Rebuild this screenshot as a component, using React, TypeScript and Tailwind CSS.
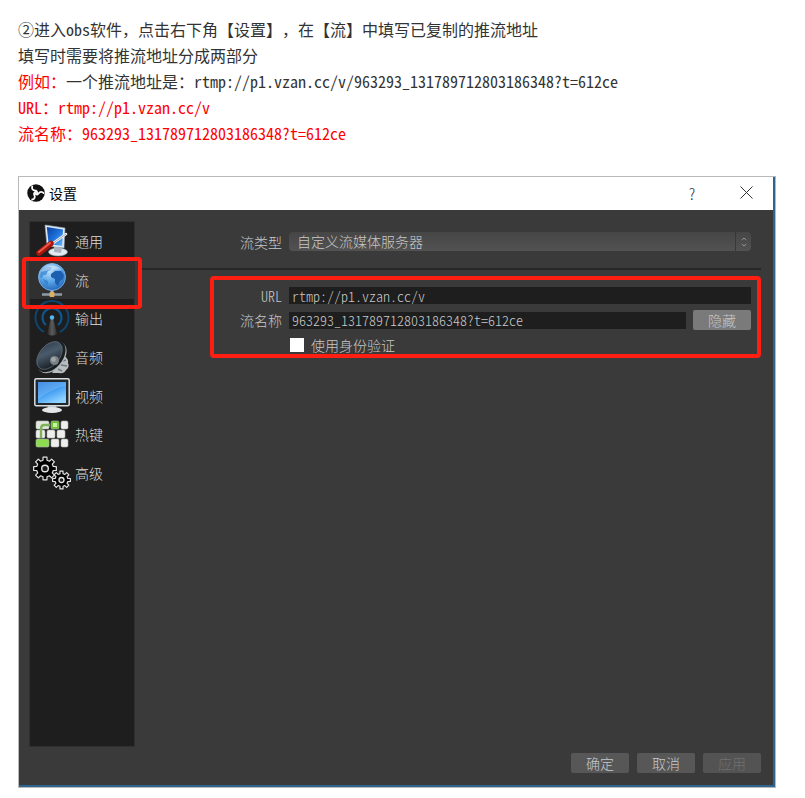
import type { ReactNode } from 'react'

function ObsLogo() {
  return (
    <svg width="18" height="18" viewBox="0 0 36 36" aria-hidden="true">
      <circle cx="18" cy="18" r="17.5" fill="#111111" />
      {[0, 120, 240].map((a) => (
        <path
          key={a}
          d="M20 19 C21 15 19 13 15.5 13 C11 12.5 9 9 10.5 5"
          fill="none"
          stroke="#ffffff"
          strokeWidth="3.6"
          strokeLinecap="round"
          transform={`rotate(${a} 18 18)`}
        />
      ))}
    </svg>
  )
}

function GeneralIcon() {
  return (
    <svg width="36" height="36" viewBox="0 0 36 36" aria-hidden="true">
      <defs>
        <linearGradient id="gen-screen" x1="0" y1="0" x2="1" y2="1">
          <stop offset="0" stopColor="#0a3f9e" />
          <stop offset="0.5" stopColor="#1d6fd8" />
          <stop offset="1" stopColor="#6db8f5" />
        </linearGradient>
      </defs>
      <ellipse cx="24" cy="29" rx="9.5" ry="4" fill="#e4eaf1" stroke="#8d98a5" strokeWidth="0.6" />
      <path d="M20 23 L28 25 L27 30 L20 29 Z" fill="#aab4c0" />
      <path d="M11 2 L31 5 L30 25 L13 23 Z" fill="#dcecf7" stroke="#9aa5b1" strokeWidth="0.6" />
      <path d="M12.8 4 L29 6.5 L28.2 23 L14.6 21 Z" fill="url(#gen-screen)" />
      <path d="M18 21 L32 11" stroke="#f4f6f8" strokeWidth="2.6" strokeLinecap="round" />
      <path d="M18 21 L32 11" stroke="#8a929b" strokeWidth="0.8" />
      <path d="M5 30 L17 20.5" stroke="#a8150c" strokeWidth="5.5" strokeLinecap="round" />
      <path d="M5 29 L16 20" stroke="#ee5a48" strokeWidth="2" strokeLinecap="round" />
    </svg>
  )
}

function StreamIcon() {
  return (
    <svg width="36" height="36" viewBox="0 0 36 36" aria-hidden="true">
      <defs>
        <radialGradient id="globe" cx="0.4" cy="0.25" r="0.8">
          <stop offset="0" stopColor="#c3e4fc" />
          <stop offset="0.5" stopColor="#5fa9ea" />
          <stop offset="1" stopColor="#1d62b8" />
        </radialGradient>
      </defs>
      <path d="M18 26 V32" stroke="#a9b3bc" strokeWidth="3" />
      <path d="M8 32.5 H28" stroke="#8d99a5" strokeWidth="2.6" />
      <rect x="15.5" y="30" width="5" height="5" rx="1" fill="#d9b164" />
      <circle cx="18" cy="15" r="13.5" fill="url(#globe)" stroke="#85bdea" strokeWidth="0.8" />
      <path d="M7 10 C9 6 13 4 18 5 L17 8 L14 9 L12 13 L9 13 L8 16 L6 15 Z" fill="#3480cf" opacity="0.7" />
      <path d="M17 12 L21 9 L27 9 L30 13 L29 17 L26 19 L24 24 L21 21 L21 17 L17 15 Z" fill="#1b5fae" />
      <path d="M9 17 L14 19 L14 23 L12 25 Z" fill="#3d87d2" />
      <path d="M7 10 C12 2 23 2 28 8 C22 6 13 8 7 10 Z" fill="#ffffff" opacity="0.4" />
    </svg>
  )
}

function OutputIcon() {
  return (
    <svg width="36" height="36" viewBox="0 0 36 36" aria-hidden="true" fill="none">
      <defs>
        <linearGradient id="mast" x1="0" y1="0" x2="1" y2="0">
          <stop offset="0" stopColor="#222222" />
          <stop offset="0.5" stopColor="#5c5c5c" />
          <stop offset="1" stopColor="#303030" />
        </linearGradient>
      </defs>
      <path d="M10 32 A16.5 16.5 0 1 1 26 32" stroke="#0d4671" strokeWidth="2" />
      <path d="M12 25 A9.5 9.5 0 1 1 24 25" stroke="#0c578f" strokeWidth="2.2" />
      <path d="M17 18 H19 L23 34 Q18 37 13 34 Z" fill="url(#mast)" />
      <circle cx="18" cy="17.5" r="2.2" fill="#54b8f5" />
    </svg>
  )
}

function AudioIcon() {
  return (
    <svg width="36" height="36" viewBox="0 0 36 36" aria-hidden="true">
      <defs>
        <linearGradient id="cone" x1="0" y1="0" x2="1" y2="0.8">
          <stop offset="0" stopColor="#2c3a48" />
          <stop offset="0.45" stopColor="#4a5b6c" />
          <stop offset="1" stopColor="#15191d" />
        </linearGradient>
      </defs>
      <path d="M30 17 Q35 20 34 24 Q36 28 32 31 Q30 35 25 34 L18 34 Z" fill="#b9bfc0" />
      <path d="M29 22 L32 21 M27 26 L33 27 M24 30 L28 32" stroke="#72797c" strokeWidth="1.5" />
      <ellipse cx="18" cy="18.5" rx="11.5" ry="18" transform="rotate(40 18 18.5)" fill="#aeb6ba" />
      <ellipse cx="17" cy="17.5" rx="11.5" ry="18" transform="rotate(40 17 17.5)" fill="#1b1f22" />
      <ellipse cx="15.5" cy="16.5" rx="10" ry="16" transform="rotate(40 15.5 16.5)" fill="url(#cone)" stroke="#66727c" strokeWidth="0.7" />
      <circle cx="20.5" cy="21.5" r="4.5" fill="#7b8286" />
      <circle cx="19.5" cy="20.5" r="2.4" fill="#a0a6aa" />
    </svg>
  )
}

function VideoIcon() {
  return (
    <svg width="36" height="36" viewBox="0 0 36 36" aria-hidden="true">
      <defs>
        <linearGradient id="vid-screen" x1="0" y1="0" x2="0.6" y2="1">
          <stop offset="0" stopColor="#2378dc" />
          <stop offset="0.5" stopColor="#3d9af0" />
          <stop offset="1" stopColor="#8ed2ff" />
        </linearGradient>
      </defs>
      <path d="M14 27 H22 L23 32 H13 Z" fill="#a7adb2" />
      <ellipse cx="18" cy="32" rx="10" ry="3" fill="#e4e7e9" />
      <rect x="0.8" y="0.8" width="34.4" height="27" rx="1.5" fill="#23282c" stroke="#d9dddf" strokeWidth="1.5" />
      <rect x="4" y="4" width="28" height="21" fill="url(#vid-screen)" />
      <path d="M4 4 H32 V8 C23 9 13 15 4 21 Z" fill="#ffffff" opacity="0.16" />
    </svg>
  )
}

const KEYS = [
  { x: 2, y: 5, w: 13, c: '#e3e8df' },
  { x: 17, y: 5, w: 8, c: '#6cc52d' },
  { x: 27, y: 5, w: 7, c: '#eeeeec' },
  { x: 2, y: 14, w: 9, c: '#eeeeec' },
  { x: 13, y: 14, w: 8, c: '#eeeeec' },
  { x: 23, y: 14, w: 8, c: '#eeeeec' },
  { x: 2, y: 23, w: 13, c: '#8ddb50' },
  { x: 17, y: 23, w: 8, c: '#eeeeec' },
  { x: 27, y: 23, w: 7, c: '#eeeeec' },
]

function HotkeysIcon() {
  return (
    <svg width="36" height="36" viewBox="0 0 36 36" aria-hidden="true">
      {KEYS.map((k) => (
        <rect key={`${k.x}-${k.y}`} x={k.x} y={k.y} width={k.w} height="8" rx="1.5" fill={k.c} stroke="#b4b7b1" strokeWidth="0.6" />
      ))}
      <rect x="19" y="7" width="4" height="4" fill="#c9f4a4" />
      <path d="M16 9 H10 Q7 9 7 13 V22" fill="none" stroke="#7fb35b" strokeWidth="2.4" />
    </svg>
  )
}

// Outline of an eight-toothed gear around (cx, cy)
function gearPath(cx: number, cy: number, outer: number, inner: number) {
  const points: string[] = []
  for (let i = 0; i < 8; i++) {
    const a = (i * Math.PI) / 4
    const corners = [
      [inner, -0.24],
      [outer, -0.17],
      [outer, 0.17],
      [inner, 0.24],
    ]
    corners.forEach(([r, d]) => {
      points.push(`${(cx + r * Math.cos(a + d)).toFixed(2)} ${(cy + r * Math.sin(a + d)).toFixed(2)}`)
    })
  }
  return `M${points.join(' L')} Z`
}

function AdvancedIcon() {
  return (
    <svg width="38" height="36" viewBox="0 0 38 36" className="shrink-0" aria-hidden="true" fill="#000000" stroke="#e6e6e6" strokeLinejoin="round">
      <path d={gearPath(12, 13.5, 11.5, 8.5)} strokeWidth="1.2" />
      <circle cx="12" cy="13.5" r="3.3" fill="#1e1e1e" strokeWidth="1.4" />
      <path d={gearPath(28.5, 25, 9, 6.5)} strokeWidth="1.2" />
      <circle cx="28.5" cy="25" r="2.5" fill="#1e1e1e" strokeWidth="1.3" />
    </svg>
  )
}

const SECTIONS: { label: string; icon: ReactNode }[] = [
  { label: '通用', icon: <GeneralIcon /> },
  { label: '流', icon: <StreamIcon /> },
  { label: '输出', icon: <OutputIcon /> },
  { label: '音频', icon: <AudioIcon /> },
  { label: '视频', icon: <VideoIcon /> },
  { label: '热键', icon: <HotkeysIcon /> },
  { label: '高级', icon: <AdvancedIcon /> },
]

function Sidebar() {
  return (
    <nav className="w-26 min-h-[524px] shrink-0 bg-[#1e1e1e] ring-1 ring-[#303030]">
      <ul className="grid h-[270px] grid-rows-7">
        {SECTIONS.map((s) => {
          const active = s.label === '流'
          return (
            <li key={s.label} className={active ? 'relative bg-[#303030]' : ''}>
              <button type="button" className="flex h-full w-full items-center gap-[5px] pl-1 text-sm text-[#dcdcdc]">
                <span className="flex w-9 shrink-0 justify-center">{s.icon}</span>
                <span>{s.label}</span>
              </button>
              {active && (
                <span className="pointer-events-none absolute -inset-x-2 -top-1 -bottom-[10px] z-10 rounded border-4 border-[#ff1f12]" />
              )}
            </li>
          )
        })}
      </ul>
    </nav>
  )
}

function StreamSettings() {
  return (
    <form className="flex min-w-0 flex-1 flex-col">
      <div className="flex h-[39px] items-center pr-[10px]">
        <label htmlFor="type" className="w-[147px] shrink-0 pr-[7px] text-right leading-[18px]">
          流类型
        </label>
        <div className="relative min-w-0 flex-1">
          <select
            id="type"
            className="block h-[19px] w-full appearance-none rounded-sm bg-linear-to-b from-[#464646] to-[#525252] pb-[2px] pl-2 leading-4"
          >
            <option>自定义流媒体服务器</option>
          </select>
          <span className="pointer-events-none absolute inset-y-0 right-0 flex w-4 items-center justify-center border-l border-[#383838]">
            <svg width="6" height="10" viewBox="0 0 6 10" fill="none" stroke="#949494" aria-hidden="true">
              <path d="M0.8 3 L3 1 L5.2 3 M0.8 7 L3 9 L5.2 7" />
            </svg>
          </span>
        </div>
      </div>

      <hr className="mt-[7px] border-t-2 border-[#272727]" />

      <div className="mt-[6px] ml-[68px] flex flex-col rounded border-4 border-[#ff1f12] pt-[3px] pr-[6px]">
        <div className="flex h-[25px] items-center">
          <label htmlFor="url" className="w-[75px] shrink-0 pr-[7px] text-right leading-[18px]">
            URL
          </label>
          <input id="url" defaultValue="rtmp://p1.vzan.cc/v" className="h-[17px] min-w-0 flex-1 bg-[#1e1e1e] px-[3px] leading-4" />
        </div>
        <div className="flex h-6 items-center">
          <label htmlFor="key" className="w-[75px] shrink-0 pr-[7px] text-right leading-[18px]">
            流名称
          </label>
          <input
            id="key"
            defaultValue="963293_131789712803186348?t=612ce"
            className="mr-[7px] h-[17px] min-w-0 flex-1 bg-[#1e1e1e] px-[3px] leading-4"
          />
          <button type="button" className="h-5 w-[58px] rounded-xs bg-[#7a7a7a] leading-[18px]">
            隐藏
          </button>
        </div>
        <label className="ml-[75px] flex h-[22px] items-center gap-[7px] pt-[3px] pl-px leading-[18px]">
          <input type="checkbox" className="size-[14px] appearance-none bg-white" />
          使用身份验证
        </label>
      </div>
    </form>
  )
}

function SettingsDialog() {
  return (
    <section className="border border-[#b9b9b9] bg-[#3a3a3a] text-sm font-light text-[#c8c8c8]">
      <div className="border-r-2 border-b-2 border-[#2d648f]">
        <header className="flex h-[33px] items-center bg-white pb-[2px] pl-2 text-black">
          <ObsLogo />
          <h1 className="flex-1 pl-1 text-sm font-normal">设置</h1>
          <button type="button" aria-label="帮助" className="w-[54px] text-base text-[#333333]">
            ?
          </button>
          <button type="button" aria-label="关闭" className="flex w-[54px] justify-center">
            <svg width="13" height="13" viewBox="0 0 13 13" stroke="#333333" aria-hidden="true">
              <path d="M0.5 0.5 L12.5 12.5 M12.5 0.5 L0.5 12.5" />
            </svg>
          </button>
        </header>

        <div className="flex flex-col gap-[7px] py-3 pr-3 pl-[11px]">
          <div className="flex gap-2">
            <Sidebar />
            <StreamSettings />
          </div>
          <footer className="flex justify-end gap-2">
            <button type="button" className="h-5 w-[58px] rounded-xs bg-[#575757] leading-[18px]">
              确定
            </button>
            <button type="button" className="h-5 w-[58px] rounded-xs bg-[#575757] leading-[18px]">
              取消
            </button>
            <button type="button" disabled className="h-5 w-[58px] rounded-xs bg-[#535353] leading-[18px] text-[#707070]">
              应用
            </button>
          </footer>
        </div>
      </div>
    </section>
  )
}

// Latin text is set half-width so that two letters take the room of one hanzi
export default function App() {
  return (
    <main className="bg-white pt-4 pr-[29px] pb-[10px] pl-[18px] font-['Noto_Sans_CJK_SC',sans-serif] [font-feature-settings:'hwid']">
      <div className="mb-[30px] text-base leading-[26px] text-[#333333]">
        <p className="[font-feature-settings:normal] [text-spacing-trim:space-all]">
          ②进入<span className="[font-feature-settings:'hwid']">obs</span>软件，点击右下角【设置】，在【流】中填写已复制的推流地址
        </p>
        <p>填写时需要将推流地址分成两部分</p>
        <p>
          <span className="text-[#ff0000]">例如：</span>一个推流地址是：rtmp://p1.vzan.cc/v/963293_131789712803186348?t=612ce
        </p>
        <p className="text-[#ff0000]">URL：rtmp://p1.vzan.cc/v</p>
        <p className="text-[#ff0000]">流名称：963293_131789712803186348?t=612ce</p>
      </div>
      <SettingsDialog />
    </main>
  )
}
